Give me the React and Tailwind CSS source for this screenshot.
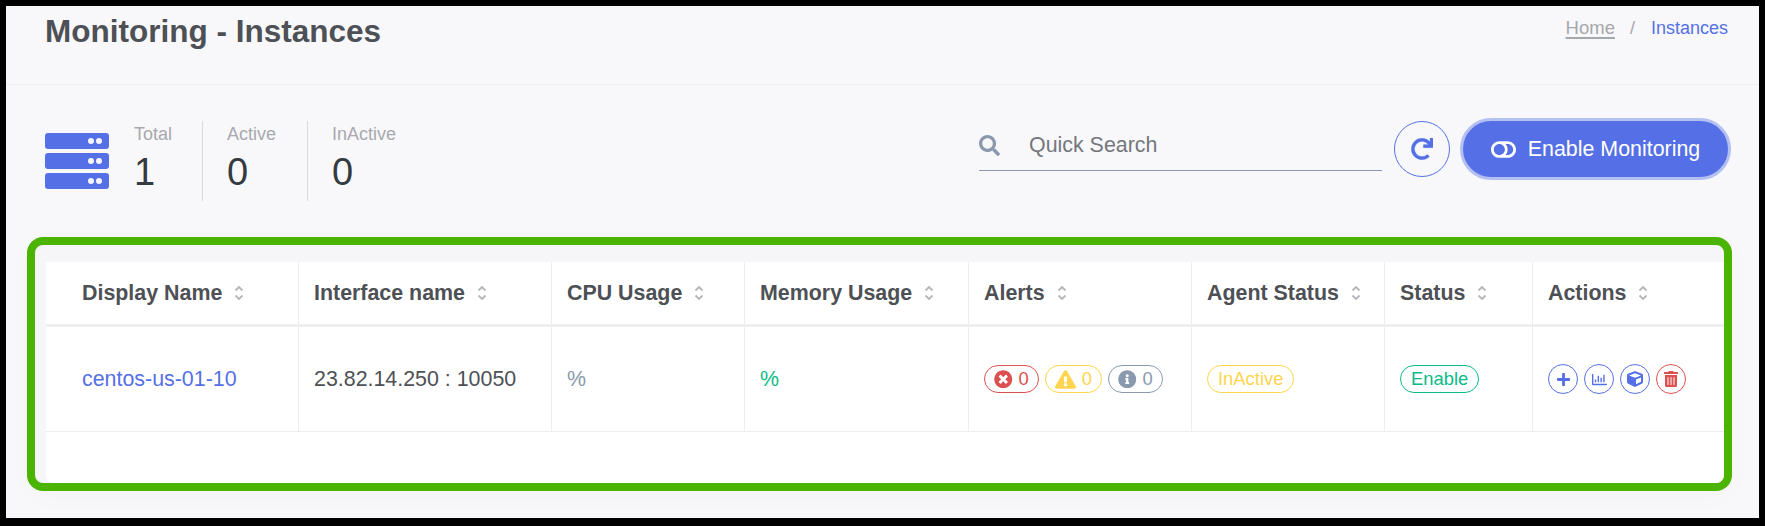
import React from "react";
import { FaSearch, FaRedo, FaTimesCircle, FaExclamationTriangle, FaInfoCircle, FaPlus, FaRegChartBar, FaCube, FaTrashAlt, FaToggleOff } from "react-icons/fa";

function Sort() {
  return (
    <svg width="10" height="16" viewBox="0 0 10 16" fill="none" stroke="#b4b6ba" strokeWidth="1.8" className="ml-[12px]">
      <path d="M1.5 5.5 5 2l3.5 3.5" />
      <path d="M1.5 10.5 5 14l3.5-3.5" />
    </svg>
  );
}

function ServerIcon() {
  return (
    <div className="flex w-16 flex-col gap-1">
      {[0, 1, 2].map((i) => (
        <div key={i} className="flex h-4 items-center justify-end gap-[2px] rounded-[3px] bg-[#5570e6] pr-[7px]">
          <span className="h-[6px] w-[6px] rounded-full bg-[#f4f5fd]" />
          <span className="h-[6px] w-[6px] rounded-full bg-[#f4f5fd]" />
        </div>
      ))}
    </div>
  );
}

function Stat({ label, value, cls }) {
  return (
    <div className={cls}>
      <div className="text-[18px] leading-[26px] text-[#a8a9ad]">{label}</div>
      <div className="mt-[4px] text-[38px] leading-[42px] text-[#343a40]">{value}</div>
    </div>
  );
}

const cols = [
  ["Display Name", "w-[253px] pl-[36px]"],
  ["Interface name", "w-[253px] pl-[15px]"],
  ["CPU Usage", "w-[193px] pl-[15px]"],
  ["Memory Usage", "w-[224px] pl-[15px]"],
  ["Alerts", "w-[223px] pl-[15px]"],
  ["Agent Status", "w-[193px] pl-[15px]"],
  ["Status", "w-[148px] pl-[15px]"],
  ["Actions", "flex-1 pl-[15px]"],
];

function Pill({ cls, children }) {
  return (
    <span className={"flex h-[28px] items-center rounded-full border-[1.5px] text-[18.4px] " + cls}>{children}</span>
  );
}

function Round({ cls, children }) {
  return (
    <span className={"flex h-[30px] w-[30px] items-center justify-center rounded-full border-[1.5px] " + cls}>{children}</span>
  );
}

export default function App() {
  return (
    <div className="h-[526px] w-[1765px] overflow-hidden bg-black pt-[6px] pb-[8px] px-[6px] font-['Liberation_Sans',Arial,sans-serif]">
      <div className="flex h-full flex-col bg-[#f8f8fb]">
        <div className="flex h-[79px] shrink-0 justify-between border-b border-[#ebecef] pl-[39px] pr-[31px]">
          <h1 className="mt-[6px] text-[31.5px] font-bold leading-[38px] text-[#4d5055]">Monitoring - Instances</h1>
          <div className="mt-[12px] flex text-[18px] leading-[20px]">
            <span className="text-[18.5px] text-[#a6a7aa] underline decoration-2 underline-offset-3">Home</span>
            <span className="ml-[15px] mr-[16px] text-[#a6a7aa]">/</span>
            <span className="text-[#5570e6]">Instances</span>
          </div>
        </div>

        <div className="flex h-[152px] shrink-0 items-center pl-[39px] pr-[28px]">
          <ServerIcon />
          <div className="ml-[25px] flex">
            <Stat label="Total" value="1" cls="h-[80px] w-[69px] border-r border-[#d9d9dc]" />
            <Stat label="Active" value="0" cls="h-[80px] w-[105px] border-r border-[#d9d9dc] pl-[24px]" />
            <Stat label="InActive" value="0" cls="h-[80px] pl-[24px]" />
          </div>
          <div className="ml-auto mt-[33px] flex items-center self-start">
            <div className="flex h-[44px] w-[403px] items-center border-b border-[#8a96b4] pb-[6px] text-[#74777c]">
              <FaSearch className="text-[21px] text-[#8a99ad]" />
              <span className="ml-[29px] text-[21.4px]">Quick Search</span>
            </div>
            <div className="ml-[12px] flex h-[56px] w-[56px] items-center justify-center rounded-full border border-[#5570e6] text-[#5570e6]">
              <FaRedo className="text-[22px]" stroke="currentColor" strokeWidth="8" />
            </div>
            <div className="ml-[10px] flex h-[62px] w-[271px] items-center justify-center gap-[12px] rounded-full border-[3px] border-[#b5c0f2] bg-[#5570e6] text-[21.4px] text-white">
              <FaToggleOff className="text-[25px]" />
              <span>Enable Monitoring</span>
            </div>
          </div>
        </div>

        <div className="ml-[21px] mr-[27px] flex h-[254px] flex-col rounded-[16px] border-[8px] border-[#4bb400] bg-[#f6f6f9] pt-[17px] shadow-[0_6px_30px_rgba(0,0,0,0.02)]">
          <div className="ml-[11px] flex h-full flex-col rounded-b-[8px] bg-white text-[21.4px]">
            <div className="flex h-[65px] shrink-0 border-b-[3px] border-[#efeff1]">
              {cols.map(([name, w], i) => (
                <div key={name} className={"flex items-center font-bold text-[#4d5055] " + w + (i < 7 ? " border-r border-[#ededf0]" : "")}>
                  {name}
                  <Sort />
                </div>
              ))}
            </div>
            <div className="flex h-[105px] shrink-0 border-b border-[#ededf0] text-[#4d5055]">
              <div className={"flex items-center border-r border-[#ededf0] text-[#5570e6] " + cols[0][1]}>centos-us-01-10</div>
              <div className={"flex items-center border-r border-[#ededf0] " + cols[1][1]}>23.82.14.250 : 10050</div>
              <div className={"flex items-center border-r border-[#ededf0] text-[#8a99ad] " + cols[2][1]}>%</div>
              <div className={"flex items-center border-r border-[#ededf0] text-[#0abb87] " + cols[3][1]}>%</div>
              <div className={"flex items-center gap-[6px] border-r border-[#ededf0] " + cols[4][1]}>
                <Pill cls="gap-[6px] border-[#dc5050] px-[9px] text-[#dc5050]"><FaTimesCircle className="text-[18.5px]" />0</Pill>
                <Pill cls="gap-[6px] border-[#ffd54f] px-[9px] text-[#ffd54f]"><FaExclamationTriangle className="text-[21px]" />0</Pill>
                <Pill cls="gap-[6px] border-[#8a99ad] px-[9px] text-[#8a99ad]"><FaInfoCircle className="text-[18.5px]" />0</Pill>
              </div>
              <div className={"flex items-center border-r border-[#ededf0] " + cols[5][1]}>
                <Pill cls="border-[#ffd54f] px-[10px] text-[#ffd54f]">InActive</Pill>
              </div>
              <div className={"flex items-center border-r border-[#ededf0] " + cols[6][1]}>
                <Pill cls="border-[#0abb87] px-[10px] text-[#0abb87]">Enable</Pill>
              </div>
              <div className={"flex items-center gap-[6px] " + cols[7][1]}>
                <Round cls="border-[#5570e6] text-[#5570e6]"><FaPlus className="text-[15px]" /></Round>
                <Round cls="border-[#5570e6] text-[#5570e6]"><FaRegChartBar className="text-[15px]" /></Round>
                <Round cls="border-[#5570e6] text-[#5570e6]"><FaCube className="text-[16px]" /></Round>
                <Round cls="border-[#dc5050] text-[#dc5050]"><FaTrashAlt className="text-[16px]" /></Round>
              </div>
            </div>
          </div>
        </div>
      </div>
    </div>
  );
}
